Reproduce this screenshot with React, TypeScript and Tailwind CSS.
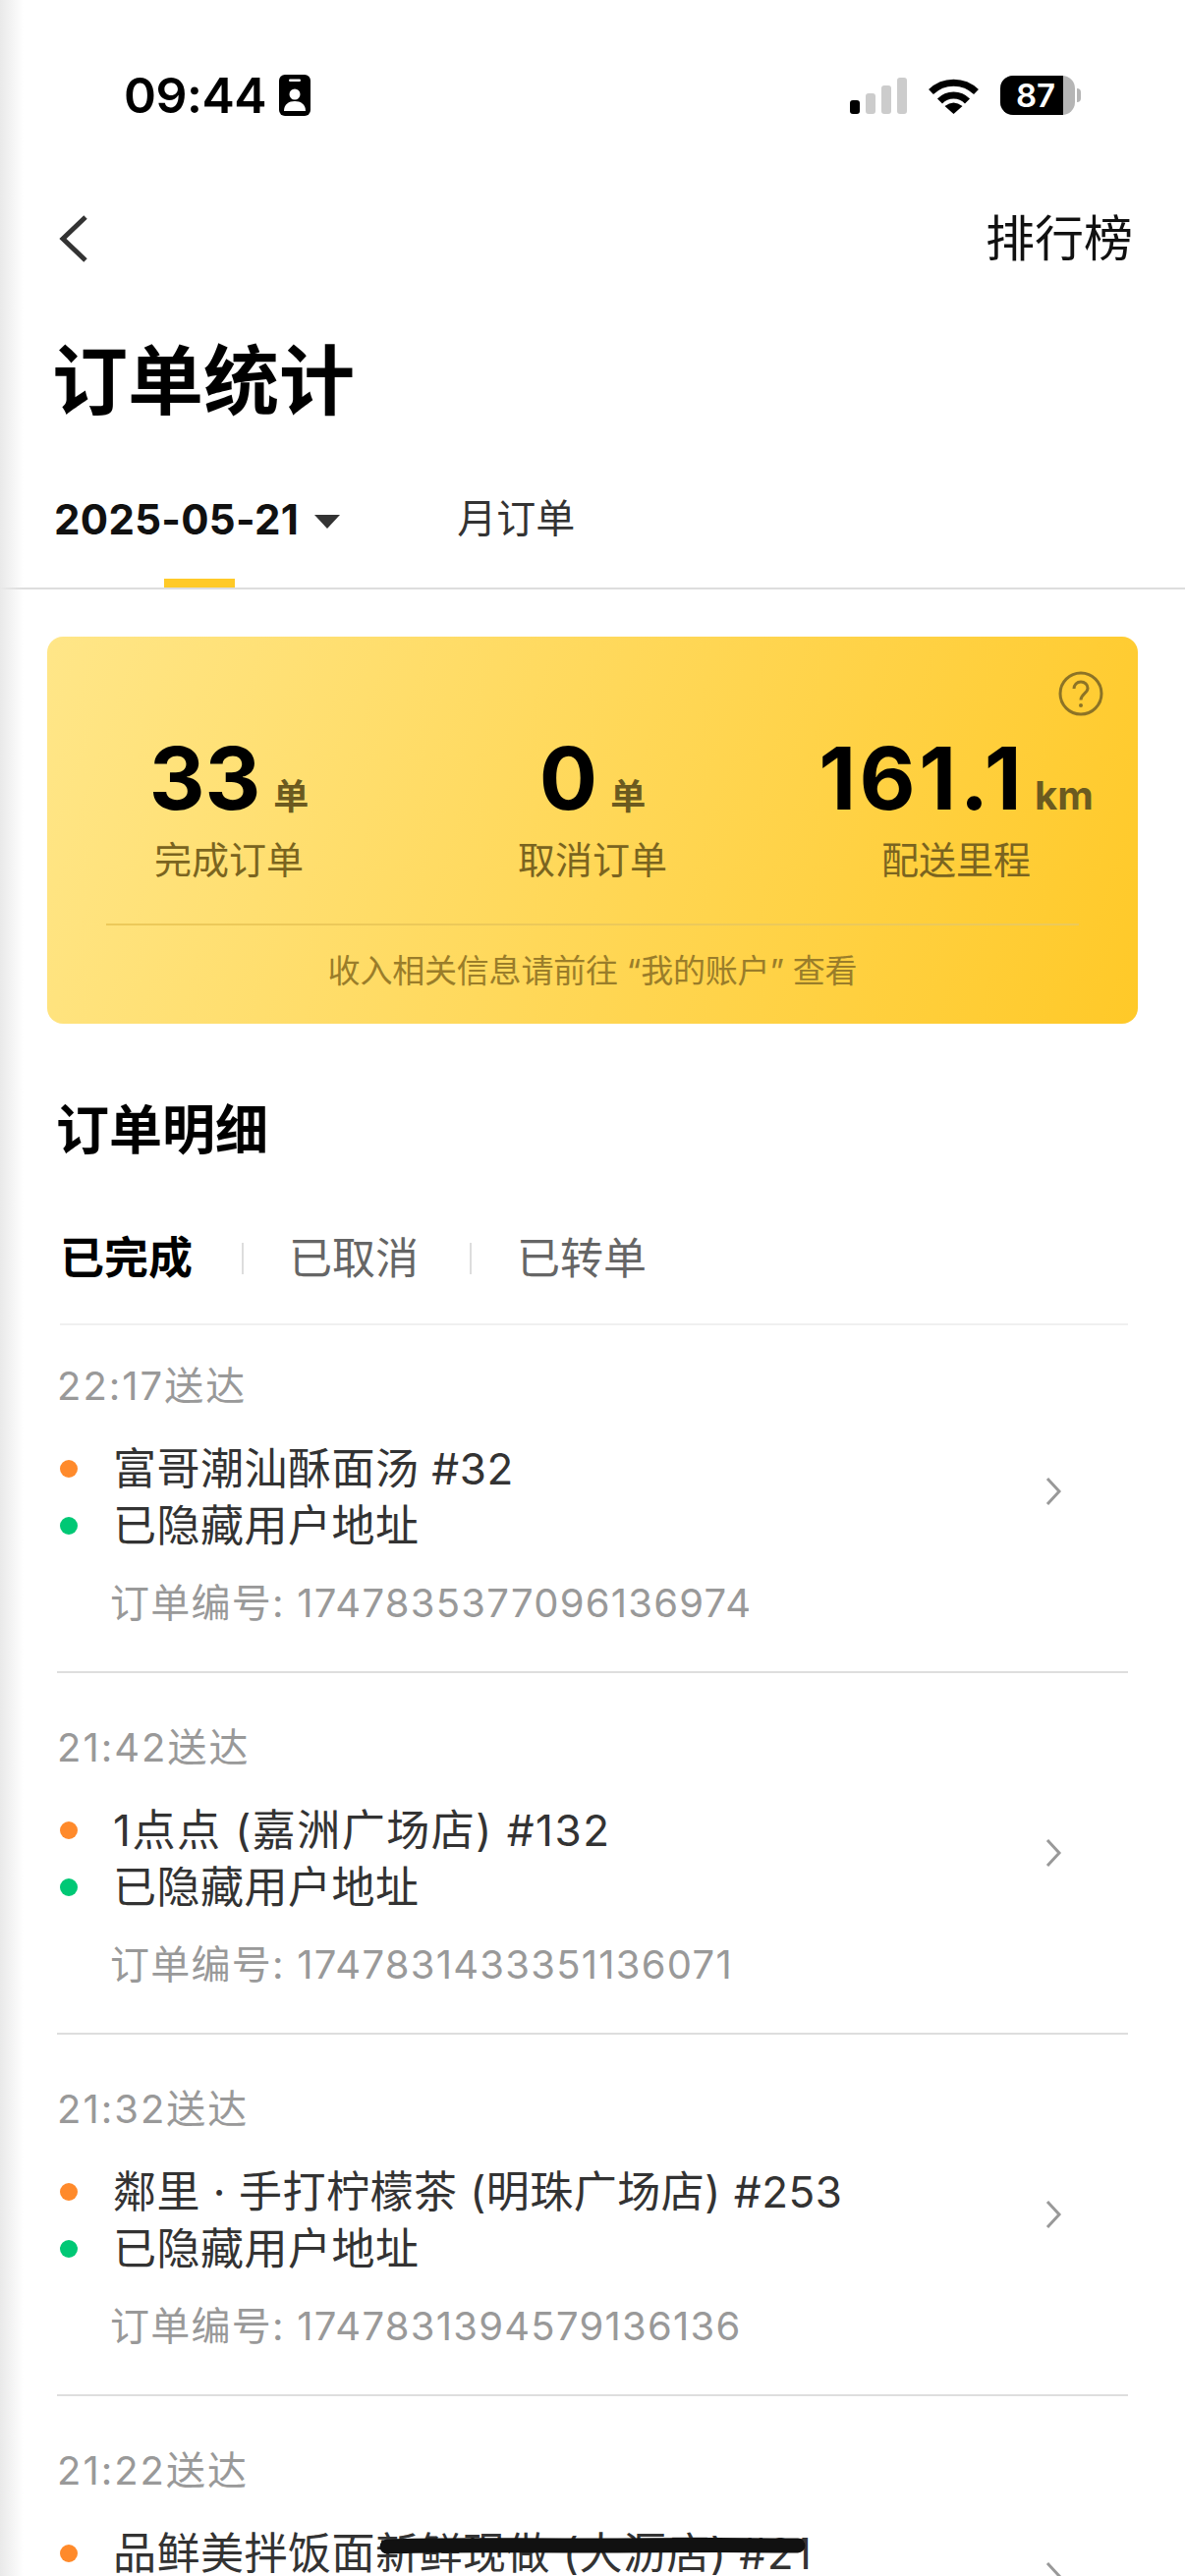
const orders = [
  { time: "22:17送达", store: "富哥潮汕酥面汤 #32", no: "1747835377096136974" },
  { time: "21:42送达", store: "1点点 (嘉洲广场店) #132", no: "1747831433351136071", wide: true },
  { time: "21:32送达", store: "鄰里 · 手打柠檬茶 (明珠广场店) #253", no: "1747831394579136136" },
  { time: "21:22送达", store: "品鲜美拌饭面新鲜现做 (大沥店) #21", scribble: true },
];

const stats = [
  { value: "33", unit: "单", label: "完成订单" },
  { value: "0", unit: "单", label: "取消订单" },
  { value: "161.1", unit: "km", label: "配送里程" },
];

function StatusBar() {
  return (
    <div className="h-[194px] flex items-center justify-between pl-[126px] pr-[106px]">
      <div className="flex items-center gap-[13px]">
        <span className="font-semibold text-[50px] leading-none text-black tracking-[-0.5px]">09:44</span>
        <svg width="32" height="42" viewBox="0 0 32 42">
          <rect width="32" height="42" rx="6" fill="#000" />
          <rect x="10" y="4.5" width="12" height="2.5" rx="1.2" fill="#fff" />
          <circle cx="16" cy="20" r="5.5" fill="#fff" />
          <path d="M5 37c0-7 5-10 11-10s11 3 11 10z" fill="#fff" />
        </svg>
      </div>
      <div className="flex items-center">
        <svg width="58" height="37" viewBox="0 0 58 37">
          <rect x="0" y="23" width="10" height="14" rx="3" fill="#000" />
          <rect x="16" y="16" width="10" height="21" rx="3" fill="#ccc" />
          <rect x="32" y="8" width="10" height="29" rx="3" fill="#ccc" />
          <rect x="48" y="0" width="10" height="37" rx="3" fill="#ccc" />
        </svg>
        <svg className="ml-[22px]" width="51" height="37" viewBox="0 0 51 37">
          <path d="M2.5 14.5A33 33 0 0 1 48.5 14.5" fill="none" stroke="#000" strokeWidth="7" />
          <path d="M11.5 24A19.5 19.5 0 0 1 39.5 24" fill="none" stroke="#000" strokeWidth="7" />
          <path d="M16.5 29Q25.5 22 34.500 29L25.500 37Z" fill="#000" />
        </svg>
        <div className="ml-[22px] flex items-center">
          <div className="relative w-[76px] h-[40px] rounded-[13px] bg-[#b5b5b5] overflow-hidden">
            <div className="h-full w-[64px] bg-black flex items-center justify-center">
              <span className="text-white font-semibold text-[33px] leading-none pl-[8px]">87</span>
            </div>
          </div>
          <div className="ml-[2px] w-[4px] h-[14px] rounded-r-full bg-[#b5b5b5]" />
        </div>
      </div>
    </div>
  );
}

function OrderRow({ order }: { order: (typeof orders)[number] }) {
  return (
    <div className="pt-[51px] first:pt-[37px] pb-[44px] border-b-2 border-[#dedede] mx-[58px]">
      <div className="text-[40px] leading-[50px] text-[#999] tracking-[2px]">{order.time}</div>
      <div className="mt-[30px] flex items-center justify-between">
        <div>
          <div className="relative flex items-center h-[58px] pl-[3px]">
            <span className="w-[18px] h-[18px] rounded-full bg-[#ff8a2b] shrink-0" />
            <span className={order.wide ? "ml-[36px] text-[44px] text-[#333] whitespace-nowrap tracking-[1.5px]" : "ml-[36px] text-[44px] text-[#333] whitespace-nowrap tracking-[0.5px]"}>{order.store}</span>
            {order.scribble && (
              <svg className="absolute left-[328px] top-[11px]" width="434" height="20" viewBox="0 0 434 20">
                <path d="M8 11C60 9 120 10 200 10S340 9 426 10" fill="none" stroke="#111" strokeWidth="15" strokeLinecap="round" />
              </svg>
            )}
          </div>
          {/* the last row runs off the bottom of the screen */}
          <div className="flex items-center h-[58px] pl-[3px]">
            {order.no && <span className="w-[18px] h-[18px] rounded-full bg-[#00c875] shrink-0" />}
            {order.no && <span className="ml-[36px] text-[44px] text-[#333] tracking-[0.5px]">已隐藏用户地址</span>}
          </div>
        </div>
        <svg className="mr-[66px] mb-[12px]" width="18" height="30" viewBox="0 0 18 30">
          <path d="M2 2l12 13L2 28" fill="none" stroke="#999" strokeWidth="3" />
        </svg>
      </div>
      {order.no && (
        <div className="mt-[25px] pl-[54px] text-[40px] leading-[50px] text-[#999] tracking-[1.25px]">订单编号: {order.no}</div>
      )}
    </div>
  );
}

export default function App() {
  return (
    <div className="relative h-[2622px] w-[1206px] overflow-hidden bg-white font-[Inter,'Noto_Sans_CJK_SC',sans-serif]">
      <StatusBar />

      {/* nav */}
      <div className="h-[98px] flex items-center justify-between pl-[60px] pr-[53px]">
        <svg width="30" height="48" viewBox="0 0 30 48">
          <path d="M27 2L4 24l23 22" fill="none" stroke="#333" strokeWidth="5" />
        </svg>
        <span className="text-[50px] text-[#111]">排行榜</span>
      </div>

      <div className="h-[192px] flex items-center pl-[53px]">
        <h1 className="text-[77px] font-bold text-black leading-none">订单统计</h1>
      </div>

      {/* date tabs */}
      <div className="relative h-[116px] border-b-2 border-[#dddddd] pl-[55px] pb-[26px] flex items-center">
        <span className="text-[42px] font-bold text-[#111] tracking-[0.3px]">2025-05-21</span>
        <span className="ml-[16px] mt-[6px] w-0 h-0 border-x-[13px] border-x-transparent border-t-[14px] border-t-[#333]" />
        <span className="ml-[119px] text-[40px] text-[#333]">月订单</span>
        <div className="absolute left-[167px] bottom-0 w-[72px] h-[9px] bg-[#ffca28]" />
      </div>

      {/* summary card */}
      <div className="relative mt-[48px] mx-[48px] h-[394px] rounded-[16px] bg-linear-[108deg] from-[#ffe688] to-[#ffc928] pt-[100px]">
        <svg className="absolute right-[35px] top-[35px]" width="46" height="46" viewBox="0 0 46 46">
          <circle cx="23" cy="23" r="21" fill="none" stroke="#8c7326" strokeWidth="3" />
          <path d="M16 18c0-4 3-7 7-7s7 3 7 6.500c0 5-7 6-7 12" fill="none" stroke="#8c7326" strokeWidth="3" />
          <circle cx="23" cy="35" r="2" fill="#8c7326" />
        </svg>
        <div className="grid grid-cols-3">
          {stats.map((s) => (
            <div key={s.label} className="flex flex-col items-center">
              <div className="flex items-baseline h-[88px]">
                <span className={s.unit === "km" ? "text-[88px] font-bold leading-[88px] text-black tracking-[3.5px]" : "text-[88px] font-bold leading-[88px] text-black"}>{s.value}</span>
                <span className={s.unit === "km" ? "ml-[10px] text-[40px] font-bold text-[#6b5a20]" : "ml-[13px] text-[36px] font-bold text-[#6b5a20]"}>{s.unit}</span>
              </div>
              <div className="mt-[14px] text-[38px] leading-[50px] text-[#7a6420]">{s.label}</div>
            </div>
          ))}
        </div>
        <div className="mt-[40px] mx-[60px] h-[2px] bg-[#ecc95a]" />
        <div className="mt-[24px] text-center text-[33px] leading-[44px] text-[#9a7d2a] tracking-[-0.2px]">收入相关信息请前往 “我的账户” 查看</div>
      </div>

      {/* detail */}
      <h2 className="mt-[79px] pl-[57px] text-[54px] leading-[60px] font-bold text-black">订单明细</h2>
      <div className="mt-[70px] ml-[61px] mr-[58px] pb-[36px] border-b-2 border-[#f0f0f0] flex items-center text-[44px] leading-[60px] text-[#666]">
        <span className="font-bold text-black text-[45px]">已完成</span>
        <span className="ml-[50px] w-[2px] h-[32px] bg-[#ddd]" />
        <span className="ml-[46px]">已取消</span>
        <span className="ml-[52px] w-[2px] h-[32px] bg-[#ddd]" />
        <span className="ml-[46px]">已转单</span>
      </div>

      <div>
        {orders.map((o) => (
          <OrderRow key={o.time} order={o} />
        ))}
      </div>

      {/* shadow from the previous page along the left edge */}
      <div className="absolute left-0 top-0 h-full w-[24px] bg-linear-to-r from-[#e9e9e9] to-transparent" />
    </div>
  );
}
